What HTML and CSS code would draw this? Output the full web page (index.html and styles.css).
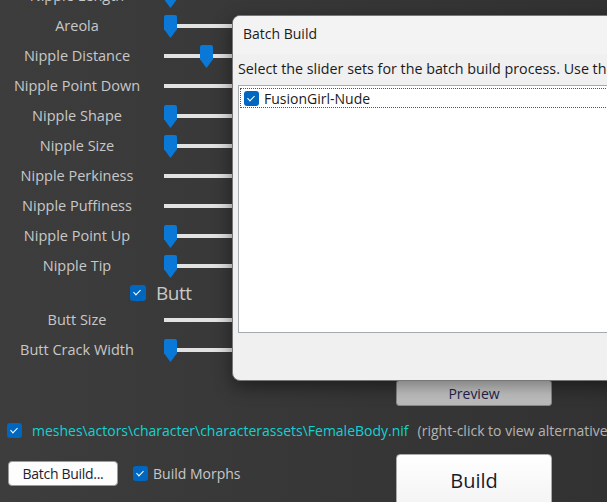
FILE: index.html
```html
<!DOCTYPE html>
<html lang="en">
<head>
    <meta charset="UTF-8">
    <meta name="viewport" content="width=device-width, initial-scale=1.0">
    <title>BodySlide</title>
    <link rel="stylesheet" href="styles.css">
</head>
<body>

    <div class="app">

        <!-- Slider list (scrolled part way down) -->
        <div class="sliders">
            <div class="slider-list">
                <div class="row"><span class="label">Nipple Length</span><div class="track"><span class="thumb" style="left: 0px;"></span></div></div>
                <div class="row"><span class="label">Areola</span><div class="track"><span class="thumb" style="left: 0px;"></span></div></div>
                <div class="row"><span class="label">Nipple Distance</span><div class="track"><span class="thumb" style="left: 36px;"></span></div></div>
                <div class="row"><span class="label">Nipple Point Down</span><div class="track"><span class="thumb" style="left: 100px;"></span></div></div>
                <div class="row"><span class="label">Nipple Shape</span><div class="track"><span class="thumb" style="left: 0px;"></span></div></div>
                <div class="row"><span class="label">Nipple Size</span><div class="track"><span class="thumb" style="left: 0px;"></span></div></div>
                <div class="row"><span class="label">Nipple Perkiness</span><div class="track"><span class="thumb" style="left: 100px;"></span></div></div>
                <div class="row"><span class="label">Nipple Puffiness</span><div class="track"><span class="thumb" style="left: 100px;"></span></div></div>
                <div class="row"><span class="label">Nipple Point Up</span><div class="track"><span class="thumb" style="left: 0px;"></span></div></div>
                <div class="row"><span class="label">Nipple Tip</span><div class="track"><span class="thumb" style="left: 0px;"></span></div></div>

                <div class="group">
                    <span class="check big"></span>
                    <span class="group-name">Butt</span>
                </div>

                <div class="row"><span class="label">Butt Size</span><div class="track"><span class="thumb" style="left: 100px;"></span></div></div>
                <div class="row"><span class="label">Butt Crack Width</span><div class="track"><span class="thumb" style="left: 0px;"></span></div></div>
            </div>
        </div>

        <div class="preview-row">
            <button class="btn-preview">Preview</button>
        </div>

        <div class="path-row">
            <span class="check"></span>
            <span class="path">meshes\actors\character\characterassets\FemaleBody.nif</span>
            <span class="hint">(right-click to view alternatives)</span>
        </div>

        <div class="build-row">
            <div class="build-left">
                <button class="btn-batch">Batch Build...</button>
                <label class="morphs"><span class="check"></span>Build Morphs</label>
            </div>
            <button class="btn-build">Build</button>
        </div>

    </div>

    <!-- Batch Build dialog -->
    <div class="dialog">
        <div class="dialog-title">Batch Build</div>
        <div class="dialog-body">
            <p class="dialog-text">Select the slider sets for the batch build process. Use the right-click menu to select or clear all.</p>
            <div class="listbox">
                <div class="list-item">
                    <span class="check"></span>
                    <span>FusionGirl-Nude</span>
                </div>
            </div>
        </div>
    </div>

</body>
</html>
```

FILE: styles.css
```css
html, body {
    overflow: hidden;
}

body {
    margin: 0;
    height: 502px;
    font-family: "Open Sans", "Noto Sans", sans-serif;
    font-size: 14px;
    color: #c8c8c8;
    background: linear-gradient(to right, #3d3d3d, #383838 40%, #323232);
}

/* Sliders */
.sliders {
    height: 380px;
    overflow: hidden;
}

.slider-list {
    margin-top: -19px;
}

.row {
    display: grid;
    grid-template-columns: 154px 1fr;
    align-items: center;
    height: 30px;
}

.label {
    text-align: center;
    white-space: nowrap;
    font-size: 14.5px;
    line-height: 20px;
}

.track {
    position: relative;
    margin-left: 10px;
    height: 4px;
    background-color: #e2e2e2;
}

.thumb {
    position: absolute;
    top: -9px;
    width: 13px;
    height: 23px;
    background-color: #0a78d7;
    border-radius: 2px 2px 0 0;
    clip-path: polygon(0 0, 100% 0, 100% 62%, 50% 100%, 0 62%);
}

.group {
    display: flex;
    align-items: center;
    gap: 10px;
    height: 24px;
    padding-left: 130px;
}

.group-name {
    font-size: 19px;
    letter-spacing: -0.5px;
}

/* Checkboxes */
.check {
    position: relative;
    flex: none;
    display: inline-block;
    width: 15px;
    height: 15px;
    background-color: #0067c0;
    border-radius: 3px;
}

.check::after {
    content: "";
    position: absolute;
    left: 5px;
    top: 3px;
    width: 3px;
    height: 6px;
    border: solid #fff;
    border-width: 0 1px 1px 0;
    transform: rotate(45deg);
}

.check.big {
    width: 16px;
    height: 16px;
}

/* Bottom controls */
.preview-row {
    padding-left: 396px;
}

.btn-preview {
    width: 156px;
    height: 26px;
    font-family: inherit;
    font-size: 14px;
    color: #23234a;
    background: linear-gradient(#d2d2d2, #b8b8b8);
    border: 1px solid #888;
    border-radius: 3px;
    padding: 0;
}

.path-row {
    display: flex;
    align-items: center;
    gap: 10px;
    height: 20px;
    margin-top: 14px;
    padding-left: 7px;
    white-space: nowrap;
}

.path {
    color: #12d2d2;
}

.hint {
    margin-left: -1px;
    color: #b4b4b4;
}

.build-row {
    display: flex;
    margin-top: 14px;
}

.build-left {
    display: flex;
    align-items: center;
    gap: 15px;
    width: 388px;
    height: 38px;
    padding-left: 8px;
    box-sizing: border-box;
}

.btn-batch {
    width: 110px;
    height: 25px;
    font-family: inherit;
    font-size: 14px;
    color: #1c1c30;
    background-color: #fdfdfd;
    border: 1px solid #9a9a9a;
    border-radius: 4px;
    padding: 0;
    letter-spacing: -0.3px;
}

.morphs {
    display: flex;
    align-items: center;
    gap: 5px;
}

.btn-build {
    width: 156px;
    height: 60px;
    margin-left: 8px;
    font-family: inherit;
    font-size: 20px;
    color: #1a1a2e;
    background: linear-gradient(#ffffff, #f2f2f2);
    border: 1px solid #aaaaaa;
    border-radius: 4px;
    padding: 0 0 8px;
}

/* Batch Build dialog */
.dialog {
    position: absolute;
    left: 232px;
    top: 15px;
    width: 420px;
    height: 364px;
    background-color: #f0f0f0;
    border: 1px solid #777;
    border-radius: 8px;
    box-shadow: 0 6px 18px rgba(0, 0, 0, 0.45);
    overflow: hidden;
    color: #1b1b1b;
}

.dialog-title {
    height: 38px;
    line-height: 36px;
    padding-left: 10px;
    background-color: #f3f3f3;
}

.dialog-body {
    padding: 6px 0 0 5px;
}

.dialog-text {
    margin: 0;
    font-size: 14.3px;
    line-height: 18px;
    white-space: nowrap;
}

.listbox {
    margin-top: 7px;
    height: 244px;
    background-color: #fff;
    border: 1px solid #a5a9b0;
    padding: 2px 0 0 1px;
}

.list-item {
    display: flex;
    align-items: center;
    gap: 5px;
    height: 18px;
    padding-left: 3px;
    border: 1px dotted #555;
}
```
